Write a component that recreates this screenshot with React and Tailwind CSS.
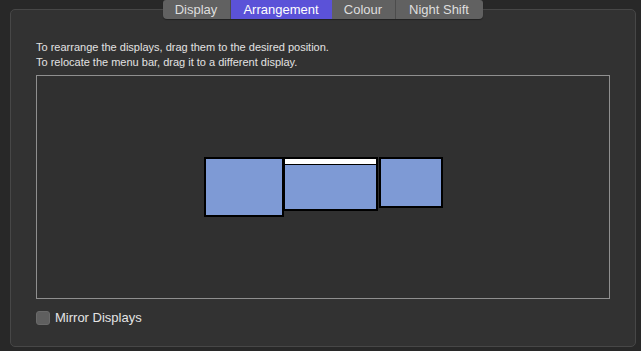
export default function App() {
  const font = { fontFamily: '"Liberation Sans", Arial, sans-serif' };
  return (
    <div className="w-[641px] h-[351px] bg-[#282828] overflow-hidden text-[#dedede]" style={font}>
      <div className="flex justify-center pl-[4px]">
        <div className="flex h-[19px] rounded-b-[4px] rounded-t-[3px] overflow-hidden bg-[#616161] text-[13px] leading-[19px] shadow-[0_1px_1px_rgba(0,0,0,0.35)]">
          <div className="w-[68px] text-center border-r border-[#4c4c4c]">Display</div>
          <div className="w-[101px] text-center bg-[#5b52d8] text-white">Arrangement</div>
          <div className="w-[64px] text-center border-r border-[#4c4c4c]">Colour</div>
          <div className="w-[87px] text-center">Night Shift</div>
        </div>
      </div>
      <div className="mx-[10px] -mt-[10px] w-[626px] h-[338px] rounded-[5px] border border-[#474747] bg-[#323232] px-[25px] pt-[30px]">
        <div className="text-[11px] leading-[15px] text-[#e2e2e2]">
          <div>To rearrange the displays, drag them to the desired position.</div>
          <div>To relocate the menu bar, drag it to a different display.</div>
        </div>
        <div className="mt-[5px] w-[574px] h-[224px] border border-[#8f8f8f] bg-[#303030] flex justify-center pt-[81px] pl-[1px]">
          <div className="flex items-start">
            <div className="w-[80px] h-[60px] bg-[#7e9ad5] border-2 border-black" />
            <div className="-ml-[1px] w-[95px] h-[54px] bg-[#7e9ad5] border-2 border-black flex flex-col">
              <div className="h-[5px] bg-white border-b-[1px] border-black box-content" />
            </div>
            <div className="ml-[1px] w-[64px] h-[51px] bg-[#7e9ad5] border-2 border-black" />
          </div>
        </div>
        <div className="mt-[11px] flex items-center gap-[5px]">
          <div className="w-[14px] h-[14px] rounded-[3px] bg-[#5f5f5f] border border-[#6a6a6a]" />
          <span className="text-[13px] leading-[16px] text-[#e4e4e4]">Mirror Displays</span>
        </div>
      </div>
    </div>
  );
}
